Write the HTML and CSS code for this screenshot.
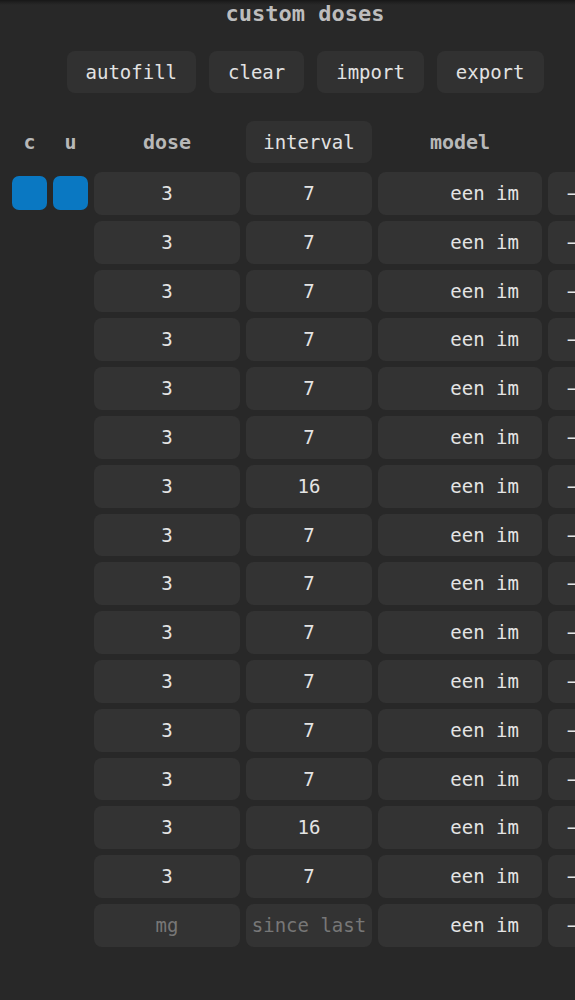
FILE: index.html
```html
<!DOCTYPE html>
<html>
<head>
<meta charset="utf-8">
<link rel="stylesheet" href="styles.css">
</head>
<body>
<div class="page">
  <h1 class="title">custom doses</h1>
  <div class="actions">
    <button class="btn">autofill</button>
    <button class="btn">clear</button>
    <button class="btn">import</button>
    <button class="btn">export</button>
  </div>
  <div class="table">
    <div class="head">c</div>
    <div class="head">u</div>
    <div class="head">dose</div>
    <div class="head"><span class="head-btn">interval</span></div>
    <div class="head">model</div>
    <div class="head"></div>

    <div class="check on"></div><div class="check on"></div>
    <div class="cell">3</div><div class="cell">7</div><div class="cell model">een im</div><div class="cell rm">−</div>

    <div></div><div></div>
    <div class="cell">3</div><div class="cell">7</div><div class="cell model">een im</div><div class="cell rm">−</div>
    <div></div><div></div>
    <div class="cell">3</div><div class="cell">7</div><div class="cell model">een im</div><div class="cell rm">−</div>
    <div></div><div></div>
    <div class="cell">3</div><div class="cell">7</div><div class="cell model">een im</div><div class="cell rm">−</div>
    <div></div><div></div>
    <div class="cell">3</div><div class="cell">7</div><div class="cell model">een im</div><div class="cell rm">−</div>
    <div></div><div></div>
    <div class="cell">3</div><div class="cell">7</div><div class="cell model">een im</div><div class="cell rm">−</div>
    <div></div><div></div>
    <div class="cell">3</div><div class="cell">16</div><div class="cell model">een im</div><div class="cell rm">−</div>
    <div></div><div></div>
    <div class="cell">3</div><div class="cell">7</div><div class="cell model">een im</div><div class="cell rm">−</div>
    <div></div><div></div>
    <div class="cell">3</div><div class="cell">7</div><div class="cell model">een im</div><div class="cell rm">−</div>
    <div></div><div></div>
    <div class="cell">3</div><div class="cell">7</div><div class="cell model">een im</div><div class="cell rm">−</div>
    <div></div><div></div>
    <div class="cell">3</div><div class="cell">7</div><div class="cell model">een im</div><div class="cell rm">−</div>
    <div></div><div></div>
    <div class="cell">3</div><div class="cell">7</div><div class="cell model">een im</div><div class="cell rm">−</div>
    <div></div><div></div>
    <div class="cell">3</div><div class="cell">7</div><div class="cell model">een im</div><div class="cell rm">−</div>
    <div></div><div></div>
    <div class="cell">3</div><div class="cell">16</div><div class="cell model">een im</div><div class="cell rm">−</div>
    <div></div><div></div>
    <div class="cell">3</div><div class="cell">7</div><div class="cell model">een im</div><div class="cell rm">−</div>
    <div></div><div></div>
    <div class="cell placeholder">mg</div><div class="cell placeholder">since last</div><div class="cell model">een im</div><div class="cell rm">−</div>
  </div>
</div>
</body>
</html>
```
FILE: styles.css
```css
html, body {
  margin: 0;
  padding: 0;
}
body {
  background: #282828 linear-gradient(to bottom, #171717 0px, #1f1f1f 2px, #282828 5px) no-repeat;
  background-size: 100% 6px;
  background-color: #282828;
  font-family: "DejaVu Sans Mono", "Liberation Mono", monospace;
  color: #e2e2e2;
  overflow: hidden;
}
.page {
  width: 610px;
  min-height: 1000px;
}
.title {
  margin: 0;
  padding-top: 0;
  font-size: 22px;
  line-height: 27px;
  font-weight: bold;
  color: #bdbdbd;
  text-align: center;
}
.actions {
  display: flex;
  justify-content: center;
  gap: 13px;
  margin-top: 24px;
}
.btn {
  font-family: inherit;
  font-size: 19px;
  color: #e2e2e2;
  background: #313131;
  border: none;
  border-radius: 8px;
  height: 42px;
  padding: 0 19px;
}
.table {
  display: grid;
  grid-template-columns: 35px 35px 146px 126px 164px 49px;
  grid-template-rows: 45px;
  grid-auto-rows: 42.8px;
  column-gap: 6px;
  row-gap: 6px;
  padding-left: 12px;
  margin-top: 28px;
}
.head {
  font-size: 20px;
  font-weight: bold;
  color: #b8b8b8;
  text-align: center;
  line-height: 42px;
  height: 42px;
}
.head-btn {
  display: block;
  background: #313131;
  border-radius: 8px;
  font-weight: normal;
  color: #e2e2e2;
  font-size: 19px;
}
.cell {
  background: #333333;
  border-radius: 8px;
  font-size: 19px;
  line-height: 42px;
  text-align: center;
  color: #e4e4e4;
  white-space: nowrap;
  overflow: hidden;
}
.model {
  text-align: right;
  padding-right: 23px;
}
.rm {
  text-align: center;
}
.placeholder {
  color: #777777;
}
.check {
  align-self: center;
  height: 34px;
  border-radius: 7px;
}
.check.on {
  background: #0a78c2;
}
```
